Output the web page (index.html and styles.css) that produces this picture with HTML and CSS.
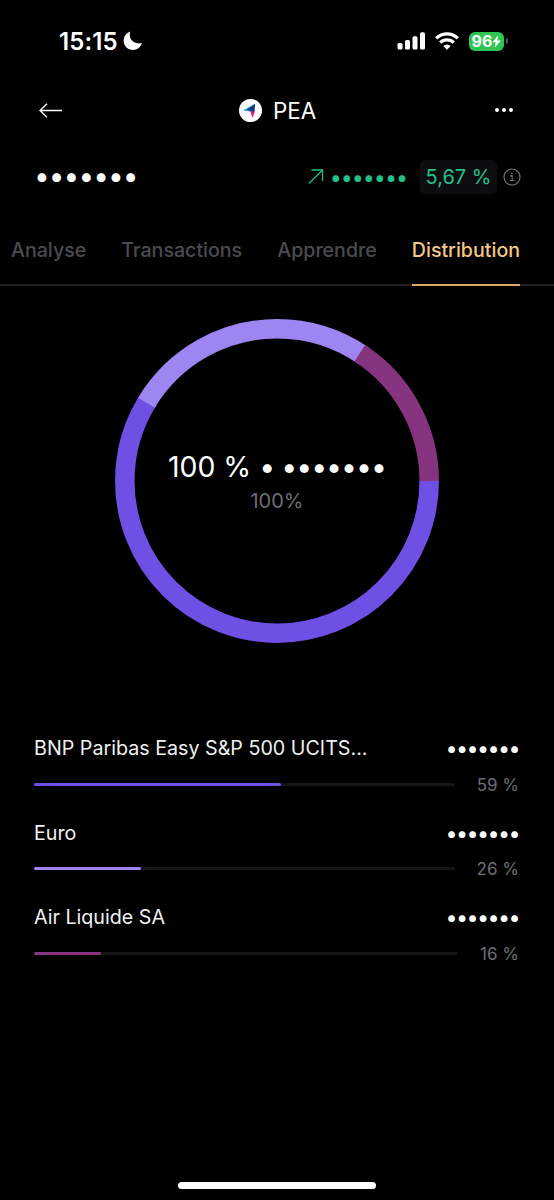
FILE: index.html
```html
<!DOCTYPE html>
<html lang="fr">
<head>
    <meta charset="UTF-8">
    <meta name="viewport" content="width=device-width, initial-scale=1.0">
    <title>PEA - Distribution</title>
    <link rel="stylesheet" href="styles.css">
</head>
<body>

    <!-- Status bar -->
    <div class="status-bar">
        <div class="status-left">
            <span class="time">15:15</span>
            <svg class="moon" width="20" height="20" viewBox="0 0 20 20">
                <path d="M7.2 0.6C5.2 6.8 9.6 14 19 12.1C17.4 16.6 14 19 10 19C4.700 19 0.700 15 0.700 9.800C0.700 5.600 3.200 2 7.200 0.600Z" fill="#fff"/>
            </svg>
        </div>
        <div class="status-right">
            <svg width="28" height="18" viewBox="0 0 28 18" fill="#fff">
                <rect x="0.500" y="11" width="5" height="6.500" rx="1.600"/>
                <rect x="8" y="8" width="5" height="9.500" rx="1.600"/>
                <rect x="15.500" y="4.300" width="5" height="13.200" rx="1.600"/>
                <rect x="23" y="0.300" width="5" height="17.200" rx="1.600"/>
            </svg>
            <svg width="24" height="18" viewBox="0 0 24 18" fill="none" stroke="#fff" stroke-width="3.200">
                <path d="M1.200 6.300a15.300 15.300 0 0 1 21.600 0"/>
                <path d="M5.200 10.700a9.600 9.600 0 0 1 13.600 0"/>
                <path d="M8.300 14a5.200 5.200 0 0 1 7.400 0L12 17.800z" fill="#fff" stroke="none"/>
            </svg>
            <div class="battery">
                <span>96</span>
                <svg width="9" height="13" viewBox="0 0 9 13"><path d="M6.300 0.300L0.300 7.200h3.400L2.700 12.700L8.800 5.500H5.300z" fill="#fff"/></svg>
            </div>
            <i class="battery-cap"></i>
        </div>
    </div>

    <!-- Account header -->
    <div class="header">
        <svg width="24" height="16" viewBox="0 0 24 16" fill="none" stroke="#fff" stroke-width="1.300">
            <path d="M23 7.500H1M8 0.700L1 7.500l7 6.800"/>
        </svg>
        <div class="account">
            <svg width="24" height="24" viewBox="0 0 24 24">
                <circle cx="12.500" cy="11.500" r="11.500" fill="#fff"/>
                <path d="M17.100 4.700L4.900 11.600l7.700 1z" fill="#1aa3dc"/>
                <path d="M17.100 4.700L9 10.500l4 2 3.500 1z" fill="#183a80"/>
                <path d="M12.300 11.800l4.200 1.200-2 6z" fill="#e0107c"/>
            </svg>
            <h1>PEA</h1>
        </div>
        <div class="more"><i></i><i></i><i></i></div>
    </div>

    <!-- Balance and performance -->
    <div class="summary">
        <span class="balance">•••••••</span>
        <div class="performance">
            <svg width="16" height="16" viewBox="0 0 16 16" fill="none" stroke="#22c08b" stroke-width="1.300">
                <path d="M1 14.500L14.500 1M3.500 1h11v11"/>
            </svg>
            <span class="gain">•••••••</span>
            <span class="percent">5,67 %</span>
            <svg width="18" height="18" viewBox="0 0 18 18" fill="none" stroke="#77777b" stroke-width="1.100">
                <circle cx="9" cy="9" r="8"/>
                <path d="M7 7.900h2.200v4.600M6.700 12.500h4.800"/>
                <circle cx="8.900" cy="5.400" r="0.800" fill="#77777b" stroke="none"/>
            </svg>
        </div>
    </div>

    <nav class="tabs">
        <a>Analyse</a>
        <a>Transactions</a>
        <a>Apprendre</a>
        <a class="active">Distribution</a>
    </nav>

    <!-- Donut chart -->
    <div class="chart">
        <svg class="donut" width="324" height="324" viewBox="0 0 324 324" fill="none" stroke-width="19.500">
            <circle cx="162" cy="162" r="152.200" stroke="#6e50e5" pathLength="100" stroke-dasharray="59 41"/>
            <circle cx="162" cy="162" r="152.200" stroke="#9d86f1" pathLength="100" stroke-dasharray="26 74" stroke-dashoffset="-58.600"/>
            <circle cx="162" cy="162" r="152.200" stroke="#863480" pathLength="100" stroke-dasharray="15.850 84.150" stroke-dashoffset="-84.150"/>
        </svg>
        <div class="chart-label">
            <span class="total">100 % <span class="dots">• •••••••</span></span>
            <span class="share">100%</span>
        </div>
    </div>

    <!-- Positions -->
    <ul class="positions">
        <li>
            <div class="row"><span class="name">BNP Paribas Easy S&amp;P 500 UCITS...</span><span class="amount">•••••••</span></div>
            <div class="row"><div class="bar"><div class="fill violet" style="width: 58.7%"></div></div><span class="weight">59 %</span></div>
        </li>
        <li>
            <div class="row"><span class="name">Euro</span><span class="amount">•••••••</span></div>
            <div class="row"><div class="bar"><div class="fill lilac" style="width: 25.5%"></div></div><span class="weight">26 %</span></div>
        </li>
        <li>
            <div class="row"><span class="name">Air Liquide SA</span><span class="amount">•••••••</span></div>
            <div class="row"><div class="bar"><div class="fill plum" style="width: 15.8%"></div></div><span class="weight">16 %</span></div>
        </li>
    </ul>

    <div class="home-indicator"></div>

</body>
</html>
```
FILE: styles.css
```css
* {
    box-sizing: border-box;
}
body {
    margin: 0;
    height: 1200px;
    display: flex;
    flex-direction: column;
    background: #000;
    color: #fff;
    font-family: 'Inter', sans-serif;
    overflow: hidden;
}
svg {
    display: block;
    flex: none;
}

/* Status bar */
.status-bar {
    height: 82px;
    padding: 0 46px 0 59px;
    display: flex;
    justify-content: space-between;
    align-items: center;
}
.status-left,
.status-right {
    display: flex;
    align-items: center;
}
.status-left {
    gap: 5px;
}
.time {
    font-size: 24px;
    font-weight: 600;
    letter-spacing: 0.1px;
}
.status-right svg + svg {
    margin-left: 10px;
}
.battery {
    margin-left: 10px;
    width: 35px;
    height: 19px;
    border-radius: 6px;
    background: #30c552;
    display: flex;
    align-items: center;
    justify-content: center;
    font-size: 16px;
    font-weight: 700;
}
.battery-cap {
    width: 2px;
    height: 6px;
    margin-left: 2px;
    border-radius: 0 2px 2px 0;
    background: #4b5a4c;
}

/* Header */
.header {
    height: 57px;
    padding: 0 41px 0 39px;
    display: flex;
    justify-content: space-between;
    align-items: center;
}
.account {
    display: flex;
    align-items: center;
    gap: 11px;
    margin-right: 4px;
}
h1 {
    margin: 0;
    font-size: 22.4px;
    font-weight: 400;
}
.more {
    display: flex;
    gap: 3px;
    padding-bottom: 1px;
}
.more i {
    width: 4px;
    height: 4px;
    border-radius: 50%;
    background: #fff;
}

/* Balance */
.summary {
    height: 76px;
    padding: 0 33px 0 34px;
    display: flex;
    justify-content: space-between;
    align-items: center;
}
.balance {
    font-size: 28px;
    line-height: 34px;
    letter-spacing: -0.95px;
    padding-bottom: 2px;
}
.performance {
    display: flex;
    align-items: center;
    color: #22c08b;
    font-size: 20px;
}
.gain {
    margin-left: 6px;
    letter-spacing: -1.05px;
    font-size: 21.5px;
}
.percent {
    margin: 0 6px 0 13px;
    width: 77px;
    height: 34px;
    line-height: 35px;
    border-radius: 5px;
    background: #0d0d0f;
    text-align: center;
}

/* Tabs */
.tabs {
    height: 71px;
    padding: 0 34px 0 11px;
    display: flex;
    justify-content: space-between;
    border-bottom: 2px solid #202024;
    font-size: 19.6px;
    font-weight: 500;
    line-height: 71px;
    color: #4b4b52;
}
.tabs .active {
    height: 71px;
    color: #f6c686;
    border-bottom: 2px solid #d9a869;
}

/* Chart */
.chart {
    margin-top: 33px;
    display: grid;
    place-items: center;
}
.donut,
.chart-label {
    grid-area: 1 / 1;
}
.chart-label {
    display: flex;
    flex-direction: column;
    align-items: center;
    padding-top: 6px;
}
.total {
    font-size: 28.4px;
    line-height: 34px;
}
.dots {
    letter-spacing: -1px;
}
.share {
    font-size: 20px;
    line-height: 34px;
    color: #6d6d75;
}

/* Positions */
.positions {
    list-style: none;
    margin: 87px 0 0;
    padding: 0 35px 0 34px;
}
.positions li {
    height: 84.5px;
}
.row {
    display: flex;
    align-items: center;
    justify-content: space-between;
    height: 36px;
}
.name {
    font-size: 19.7px;
    color: #f0f0f2;
}
.amount {
    font-size: 21.5px;
    letter-spacing: -1.6px;
}
.bar {
    flex: 1;
    height: 3px;
    margin-right: 22px;
    border-radius: 2px;
    background: #151517;
}
.fill {
    height: 3px;
    border-radius: 2px;
}
.violet { background: #6e50e5; }
.lilac { background: #9d86f1; }
.plum { background: #863480; }
.weight {
    font-size: 17px;
    line-height: 20px;
    padding-top: 1px;
    color: #6d6d75;
}

.home-indicator {
    width: 198px;
    height: 7px;
    margin: auto auto 11px;
    border-radius: 4px;
    background: #fff;
}
```
